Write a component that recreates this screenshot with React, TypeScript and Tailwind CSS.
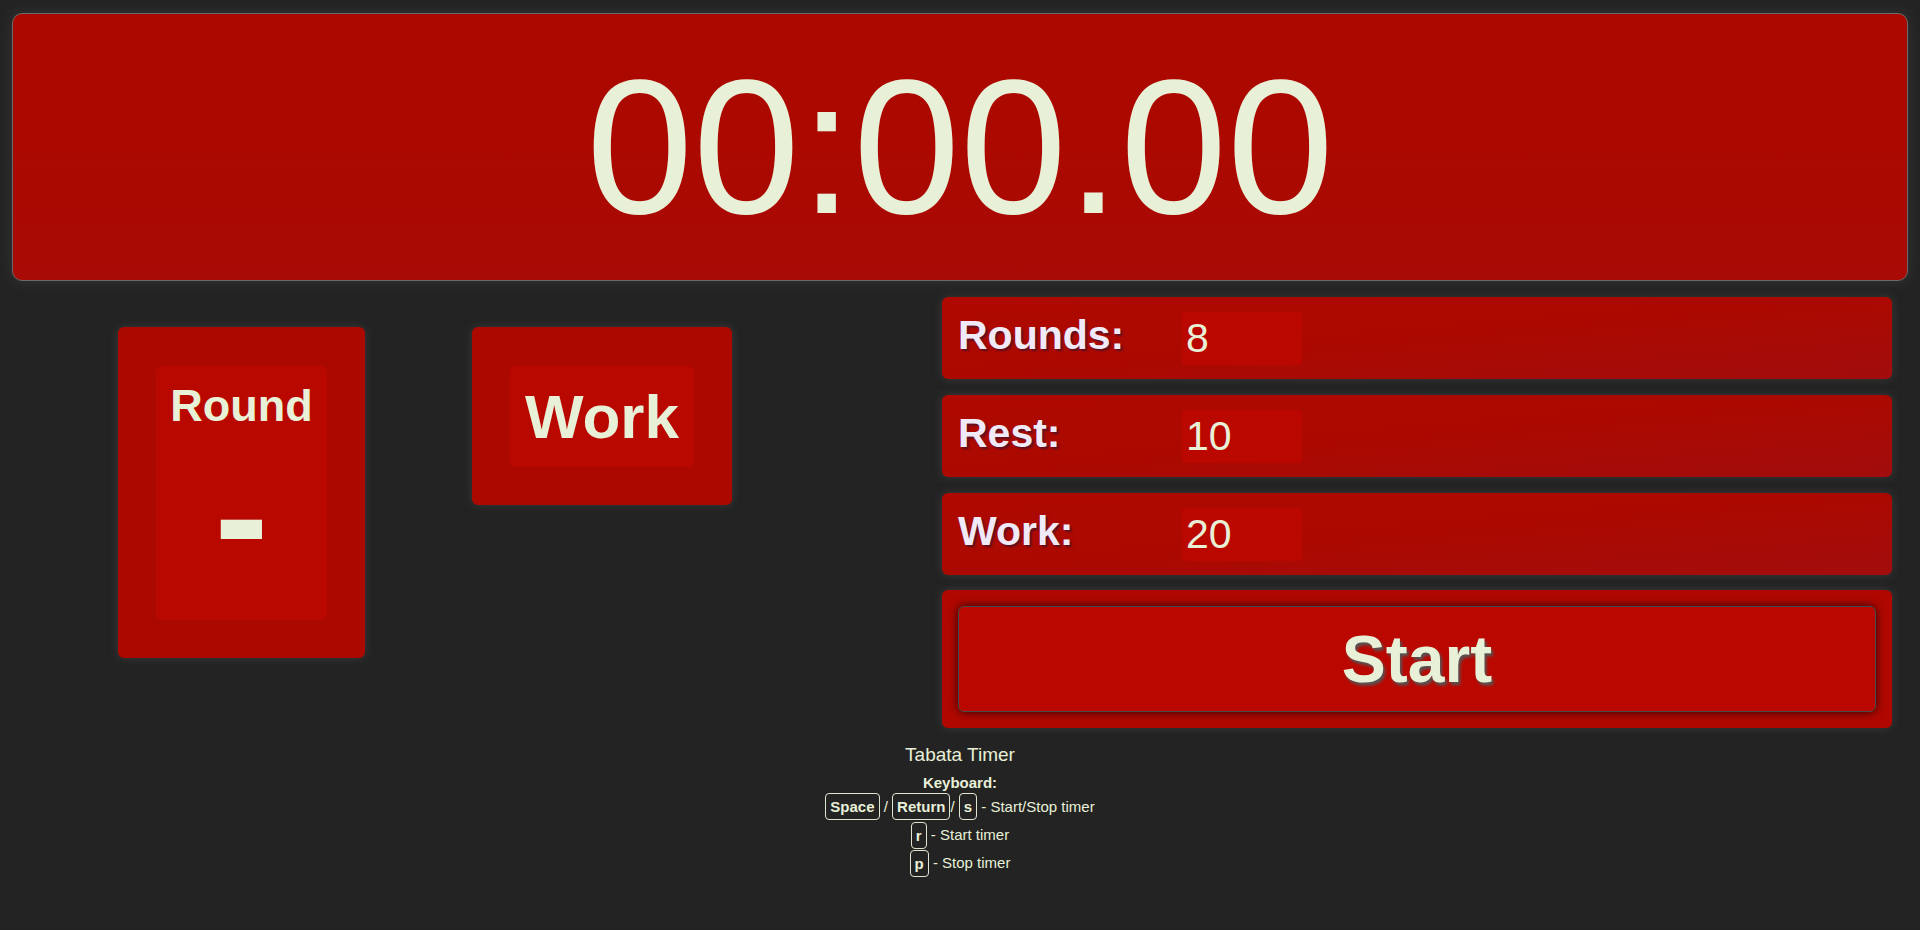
import React from 'react';

const font = { fontFamily: '"Liberation Sans", Arial, sans-serif' };

function SettingRow({ label, value }: { label: string; value: string }) {
  return (
    <div className="h-[82px] rounded-[6px] bg-linear-to-br from-[#af0900] via-[#ab0900] to-[#a20d0d] shadow-[0_0_10px_#3a3a3a] flex items-center pl-[16px]">
      <div className="w-[224px] -mt-[5px] text-[41px] font-bold text-[#efe9f8] [text-shadow:2px_2px_2px_#5c1020]">
        {label}
      </div>
      <div className="w-[120px] h-[53px] rounded-[4px] bg-[#ba0800] flex items-center pl-[4px] text-[41px] text-[#e8f0d8] leading-none">
        {value}
      </div>
    </div>
  );
}

function Kbd({ children }: { children: React.ReactNode }) {
  return (
    <span className="inline-block border border-[#dfe6d0] rounded-[4px] px-[4px] py-[4px] text-[15px] leading-[17px] font-bold">
      {children}
    </span>
  );
}

export default function App() {
  return (
    <div style={font} className="w-full h-[930px] bg-[#232323] text-[#e8f0d8] pt-[13px]">
      {/* Timer display */}
      <div className="mx-[12px] h-[268px] rounded-[10px] border border-[#6a6a6a] bg-linear-to-b from-[#ab0900] via-[#ab0900] to-[#a80a05] shadow-[0_0_14px_#353535] flex items-center justify-center">
        <span className="text-[192px] leading-none">00:00.00</span>
      </div>

      <div className="flex mt-[16px]">
        {/* Status boxes */}
        <div className="w-[942px] pt-[30px] flex items-start">
          <div className="ml-[118px] w-[247px] rounded-[6px] bg-[#ab0900] shadow-[0_0_10px_#3a3a3a] pt-[39px] pb-[38px] px-[38px]">
            <div className="h-[254px] rounded-[6px] bg-[#b90800] flex flex-col items-center">
              <div className="mt-[14px] text-[45px] font-bold leading-[52px]">Round</div>
              <div className="mt-[23px] text-[162px] font-bold leading-[120px]">-</div>
            </div>
          </div>
          <div className="ml-[107px] w-[260px] rounded-[6px] bg-[#ab0900] shadow-[0_0_10px_#3a3a3a] pt-[39px] pb-[38px] px-[38px]">
            <div className="h-[101px] rounded-[6px] bg-[#b90800] flex items-center justify-center">
              <span className="text-[62px] font-bold leading-none">Work</span>
            </div>
          </div>
        </div>

        {/* Settings */}
        <div className="w-[950px] flex flex-col gap-[16px]">
          <SettingRow label="Rounds:" value="8" />
          <SettingRow label="Rest:" value="10" />
          <SettingRow label="Work:" value="20" />
          <div className="mt-[-1px] h-[138px] rounded-[6px] bg-[#b00800] shadow-[0_0_10px_#3a3a3a] p-[16px]">
            <button className="w-full h-[106px] rounded-[6px] border border-[#4a4a4a] bg-[#ba0800] shadow-[0_0_10px_rgba(0,0,0,0.75)] flex items-center justify-center">
              <span className="text-[66px] font-bold text-[#e8f0d8] [text-shadow:2px_3px_3px_#555]">Start</span>
            </button>
          </div>
        </div>
      </div>

      {/* Footer */}
      <div className="mt-[16px] flex flex-col items-center">
        <div className="text-[19px] leading-[22px]">Tabata Timer</div>
        <div className="mt-[8px] text-[15px] leading-[17px] font-bold">Keyboard:</div>
        <div className="mt-[2px] text-[15px]">
          <div className="h-[27.5px] flex items-center justify-center whitespace-pre">
            <Kbd>Space</Kbd> / <Kbd>Return</Kbd>/ <Kbd>s</Kbd> - Start/Stop timer
          </div>
          <div className="h-[29px] flex items-center justify-center whitespace-pre">
            <Kbd>r</Kbd> - Start timer
          </div>
          <div className="h-[28px] flex items-center justify-center whitespace-pre">
            <Kbd>p</Kbd> - Stop timer
          </div>
        </div>
      </div>
    </div>
  );
}
